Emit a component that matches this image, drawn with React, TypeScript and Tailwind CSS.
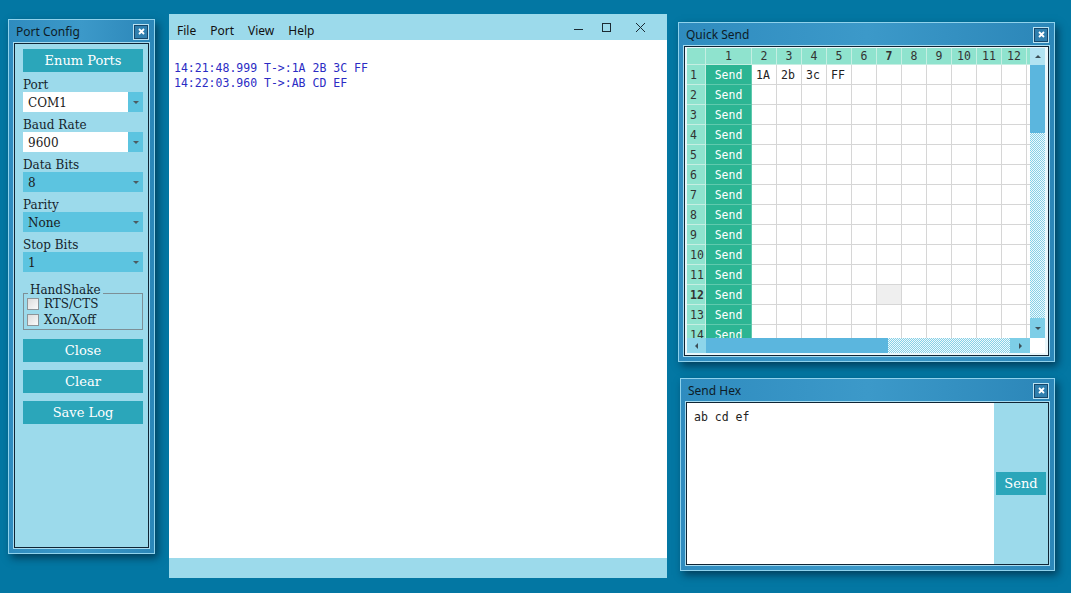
import React from 'react';

// ----------------------------------------------------------------------

type Dir = 'up' | 'down' | 'left' | 'right';

const Tri: React.FC<{ dir: Dir; color?: string }> = ({ dir, color = '#3d4f57' }) => {
  const pts: Record<Dir, string> = {
    down: '0,0 6,0 3,3',
    up: '0,3 6,3 3,0',
    left: '3,0 3,6 0,3',
    right: '0,0 0,6 3,3',
  };
  const vertical = dir === 'up' || dir === 'down';
  return (
    <svg width={vertical ? 6 : 3} height={vertical ? 3 : 6} viewBox={vertical ? '0 0 6 3' : '0 0 3 6'}>
      <polygon points={pts[dir]} fill={color} />
    </svg>
  );
};

const CloseBox: React.FC = () => (
  <div className="flex h-4 w-4 items-center justify-center border border-[#b9e2f2] bg-[#2f7fae] shadow-[inset_0_0_0_1px_#17476a]">
    <svg width="7" height="7" viewBox="0 0 7 7">
      <path d="M1 1 L6 6 M6 1 L1 6" stroke="#ffffff" strokeWidth="1.8" />
    </svg>
  </div>
);

const Frame: React.FC<{ title: string; className: string; children: React.ReactNode }> = ({ title, className, children }) => (
  <div
    className={`absolute flex flex-col border border-[#8fd2ec] bg-gradient-to-r from-[#2f8cbf] via-[#3c99c9] to-[#2b86b8] px-[5px] pb-[5px] shadow-[3px_4px_8px_rgba(0,25,45,0.6)] ${className}`}
  >
    <div className="flex h-[23px] shrink-0 items-center justify-between pl-[2px] font-['Noto_Sans',sans-serif] text-[12px] text-[#0d1c27]">
      <span>{title}</span>
      <CloseBox />
    </div>
    <div className="flex min-h-0 flex-1 border border-[#0f2535] shadow-[0_0_0_1px_#a8dcf0]">{children}</div>
  </div>
);

const Label: React.FC<{ text: string }> = ({ text }) => (
  <div className="h-5 pt-[5px] text-[12px] leading-4 text-[#15242b]">{text}</div>
);

const Combo: React.FC<{ value: string; white?: boolean }> = ({ value, white }) => (
  <div className={`flex h-5 items-center ${white ? 'bg-white' : 'bg-[#5cc4e0]'}`}>
    <span className="flex-1 pl-[5px] pt-[1px] text-[12px] leading-5 text-[#1a1a1a]">{value}</span>
    <span className={`flex h-full w-[15px] items-center justify-center ${white ? 'bg-[#5cc4e0]' : ''}`}>
      <Tri dir="down" color="#4b5c63" />
    </span>
  </div>
);

const Btn: React.FC<{ text: string; className?: string }> = ({ text, className = '' }) => (
  <div className={`flex h-[23px] items-center justify-center bg-[#2ba6ba] text-[13px] text-white ${className}`}>{text}</div>
);

const Check: React.FC<{ text: string }> = ({ text }) => (
  <div className="flex h-4 items-center gap-[5px] text-[12px] text-[#15242b]">
    <span className="h-3 w-3 border border-[#8d9599] bg-gradient-to-br from-[#dcdcdc] to-[#fbfbfb]" />
    {text}
  </div>
);

const PortConfig: React.FC = () => (
  <Frame title="Port Config" className="left-[8px] top-[19px] h-[535px] w-[147px]">
    <div className="flex flex-1 flex-col bg-[#9cdaeb] pl-2 pt-[5px] font-['DejaVu_Serif',serif]">
      <div className="flex w-[120px] flex-col">
        <Btn text="Enum Ports" />
        <Label text="Port" />
        <Combo value="COM1" white />
        <Label text="Baud Rate" />
        <Combo value="9600" white />
        <Label text="Data Bits" />
        <Combo value="8" />
        <Label text="Parity" />
        <Combo value="None" />
        <Label text="Stop Bits" />
        <Combo value="1" />

        <div className="relative mt-[21px] flex h-[37px] flex-col border border-[#7d8f96] pl-[3px] pt-[2px]">
          <span className="absolute -top-[11px] left-[4px] bg-[#9cdaeb] px-[2px] text-[12px] leading-[14px] text-[#15242b]">HandShake</span>
          <Check text="RTS/CTS" />
          <Check text="Xon/Xoff" />
        </div>

        <Btn text="Close" className="mt-[9px]" />
        <Btn text="Clear" className="mt-2" />
        <Btn text="Save Log" className="mt-2" />
      </div>
    </div>
  </Frame>
);

const MainWindow: React.FC = () => (
  <div className="absolute left-[169px] top-[14px] flex h-[564px] w-[498px] flex-col bg-white">
    <div className="flex h-[26px] items-center bg-[#9cdaeb] font-['Noto_Sans',sans-serif] text-[12px] text-[#111]">
      <div className="flex gap-[14px] pl-2 pt-[7px]">
        <span>File</span>
        <span>Port</span>
        <span>View</span>
        <span>Help</span>
      </div>
      <div className="ml-auto mr-[22px] flex items-center">
        <svg width="9" height="9" viewBox="0 0 9 9">
          <path d="M0 6.5 H9" stroke="#1b2a33" strokeWidth="1" />
        </svg>
        <svg width="9" height="9" viewBox="0 0 9 9" className="ml-[19px]">
          <rect x="0.5" y="0.5" width="8" height="8" fill="none" stroke="#1b2a33" strokeWidth="1" />
        </svg>
        <svg width="9" height="9" viewBox="0 0 9 9" className="ml-[25px]">
          <path d="M0 0 L9 9 M9 0 L0 9" stroke="#1b2a33" strokeWidth="1" />
        </svg>
      </div>
    </div>
    <div className="flex-1 pl-[5px] pt-[21px] font-['DejaVu_Sans_Mono',monospace] text-[11.5px] leading-[15px] text-[#2b2bc4]">
      <div>14:21:48.999 T-&gt;:1A 2B 3C FF</div>
      <div>14:22:03.960 T-&gt;:AB CD EF</div>
    </div>
    <div className="h-5 bg-[#9cdaeb]" />
  </div>
);

const cols = ['2', '3', '4', '5', '6', '7', '8', '9', '10', '11', '12', ''];
const rows = Array.from({ length: 14 }, (_, i) => i + 1);
const rowData: Record<number, string[]> = { 1: ['1A', '2b', '3c', 'FF'] };

const hatch = 'bg-[image:repeating-conic-gradient(#86d0e7_0_25%,#eef9fc_0_50%)] bg-[length:2px_2px]';

const QuickSend: React.FC = () => (
  <Frame title="Quick Send" className="left-[678px] top-[22px] h-[340px] w-[377px]">
    <div className="flex flex-1 flex-col bg-[#eaf7fb] pl-[2px] pt-[1px]">
      <div className="flex">
        <div className="h-[290px] w-[343px] overflow-hidden bg-white font-['DejaVu_Sans_Mono',monospace] text-[11.5px]">
          <div className="grid w-[365px] grid-cols-[19px_46px_repeat(12,25px)]">
            <div className="h-[17px] border-b border-r border-[#c5eee2] bg-[#8fe3ce]" />
            <div className="h-[17px] border-b border-r border-[#c5eee2] bg-[#8fe3ce] text-center leading-[17px] text-[#333]">1</div>
            {cols.map((c) => (
              <div
                key={`h${c}`}
                className={`h-[17px] border-b border-r border-[#c5eee2] bg-[#8fe3ce] text-center leading-[17px] text-[#333] ${c === '7' ? 'font-bold' : ''}`}
              >
                {c}
              </div>
            ))}
            {rows.map((r) => (
              <React.Fragment key={r}>
                <div className={`h-5 border-b border-r border-[#c5eee2] bg-[#8fe3ce] pl-[3px] leading-[21px] text-[#333] ${r === 12 ? 'font-bold' : ''}`}>{r}</div>
                <div className="h-5 border-b border-r border-[#5fc9ad] bg-[#2cb593] text-center leading-[21px] text-white">Send</div>
                {cols.map((c, i) => (
                  <div
                    key={`${r}-${c}`}
                    className={`h-5 border-b border-r border-[#d6d6d6] pl-[4px] leading-[21px] text-[#222] ${r === 12 && c === '7' ? 'bg-[#efefef]' : ''}`}
                  >
                    {rowData[r]?.[i] ?? ''}
                  </div>
                ))}
              </React.Fragment>
            ))}
          </div>
        </div>
        <div className="flex h-[290px] w-[15px] flex-col">
          <div className="flex h-[17px] items-center justify-center bg-[#b2e3f2]">
            <Tri dir="up" />
          </div>
          <div className="h-[68px] bg-[#5bb6de]" />
          <div className={`flex-1 ${hatch}`} />
          <div className="flex h-5 items-center justify-center bg-[#7dcee7]">
            <Tri dir="down" />
          </div>
        </div>
      </div>
      <div className="flex h-[15px]">
        <div className="flex w-[19px] items-center justify-center bg-[#8ed5ea]">
          <Tri dir="left" />
        </div>
        <div className="w-[182px] bg-[#5bb6de]" />
        <div className={`w-[122px] ${hatch}`} />
        <div className="flex w-5 items-center justify-center bg-[#7dcee7]">
          <Tri dir="right" />
        </div>
        <div className="w-[15px] bg-white" />
      </div>
    </div>
  </Frame>
);

const SendHex: React.FC = () => (
  <Frame title="Send Hex" className="left-[680px] top-[378px] h-[193px] w-[375px]">
    <div className="flex flex-1">
      <div className="flex-1 bg-white pl-[7px] pt-[7px] font-['DejaVu_Sans_Mono',monospace] text-[11.5px] leading-[15px] text-[#222]">ab cd ef</div>
      <div className="flex w-[54px] items-center justify-center bg-[#9cdaeb] font-['DejaVu_Serif',serif]">
        <Btn text="Send" className="w-[50px]" />
      </div>
    </div>
  </Frame>
);

const App: React.FC = () => {
  return (
    <div className="relative h-[593px] w-[1071px] overflow-hidden bg-[#0377a3]">
      <PortConfig />
      <MainWindow />
      <QuickSend />
      <SendHex />
    </div>
  );
};

export default App;
